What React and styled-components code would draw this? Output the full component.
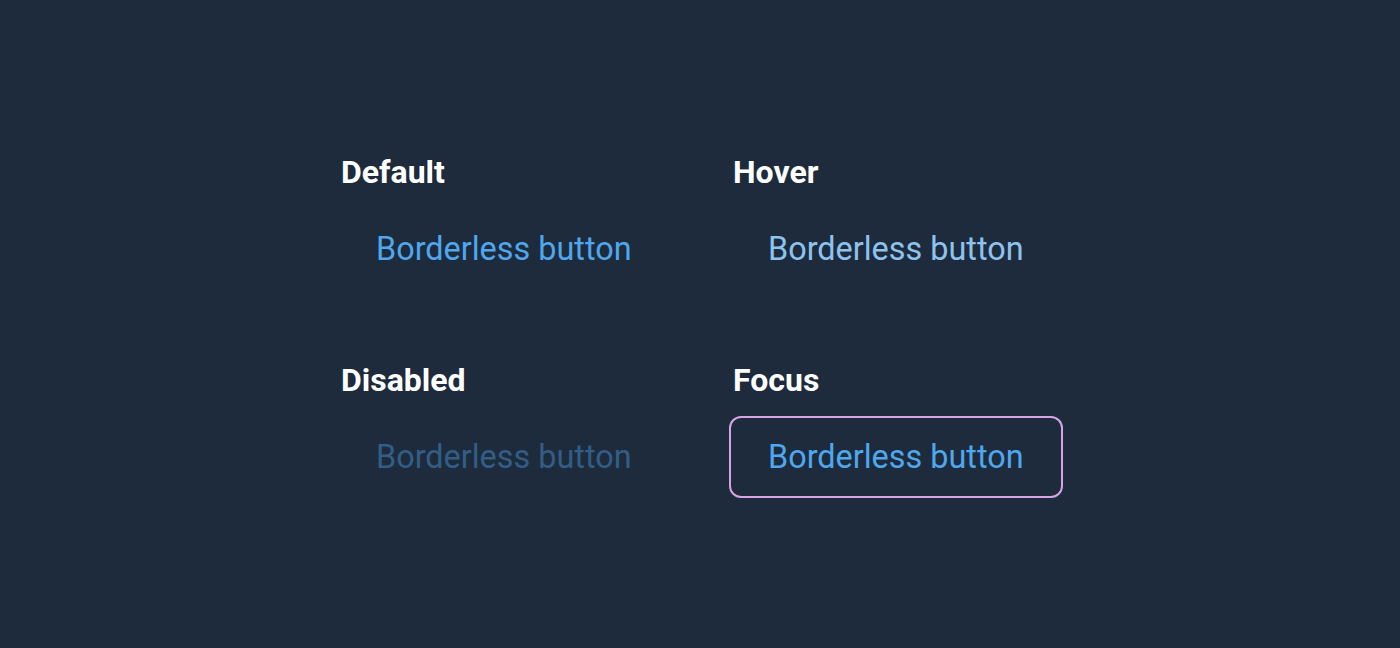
import React from 'react';
import styled, { createGlobalStyle } from 'styled-components';

const GlobalStyle = createGlobalStyle`
    html, body {
        margin: 0;
        padding: 0;
        background: #1d2b3c;
    }

    body {
        font-family: Roboto, "Liberation Sans", sans-serif;
        min-height: 648px;
    }
`;

const StyledPage = styled.div`
    min-height: 648px;
    padding-top: 153px;
    box-sizing: border-box;
    display: flex;
    justify-content: center;
    align-items: flex-start;
`;

const StyledGrid = styled.div`
    display: grid;
    grid-template-columns: 392px 334px;
    align-content: start;
    row-gap: 71px;
`;

const StyledCell = styled.div`
    display: flex;
    flex-direction: column;
    align-items: flex-start;
    gap: 17px;
`;

const StyledLabel = styled.div`
    font-size: 32px;
    line-height: 38px;
    font-weight: 700;
    color: #ffffff;
    padding-left: 4px;
`;

const colors = {
    default: '#4fa7ee',
    hover: '#8fc3ef',
    disabled: '#325d86',
    focus: '#4fa7ee',
};

const StyledButton = styled.button`
    font-family: Roboto, "Liberation Sans", sans-serif;
    font-size: 32.4px;
    line-height: 38px;
    font-weight: 400;
    white-space: nowrap;
    padding: 20px 37px;
    margin: 0;
    background: transparent;
    border: 2px solid ${(p) => (p.$state === 'focus' ? '#d8a3e4' : 'transparent')};
    border-radius: 12px;
    color: ${(p) => colors[p.$state]};
    cursor: ${(p) => (p.$state === 'disabled' ? 'default' : 'pointer')};
`;

const items = [
    { label: 'Default', state: 'default' },
    { label: 'Hover', state: 'hover' },
    { label: 'Disabled', state: 'disabled' },
    { label: 'Focus', state: 'focus' },
];

const App = () => {
    return (
        <>
            <GlobalStyle />
            <StyledPage>
                <StyledGrid>
                    {items.map((item) => (
                        <StyledCell key={item.state}>
                            <StyledLabel>{item.label}</StyledLabel>
                            <StyledButton $state={item.state} disabled={item.state === 'disabled'}>
                                Borderless button
                            </StyledButton>
                        </StyledCell>
                    ))}
                </StyledGrid>
            </StyledPage>
        </>
    );
};

export default App;
